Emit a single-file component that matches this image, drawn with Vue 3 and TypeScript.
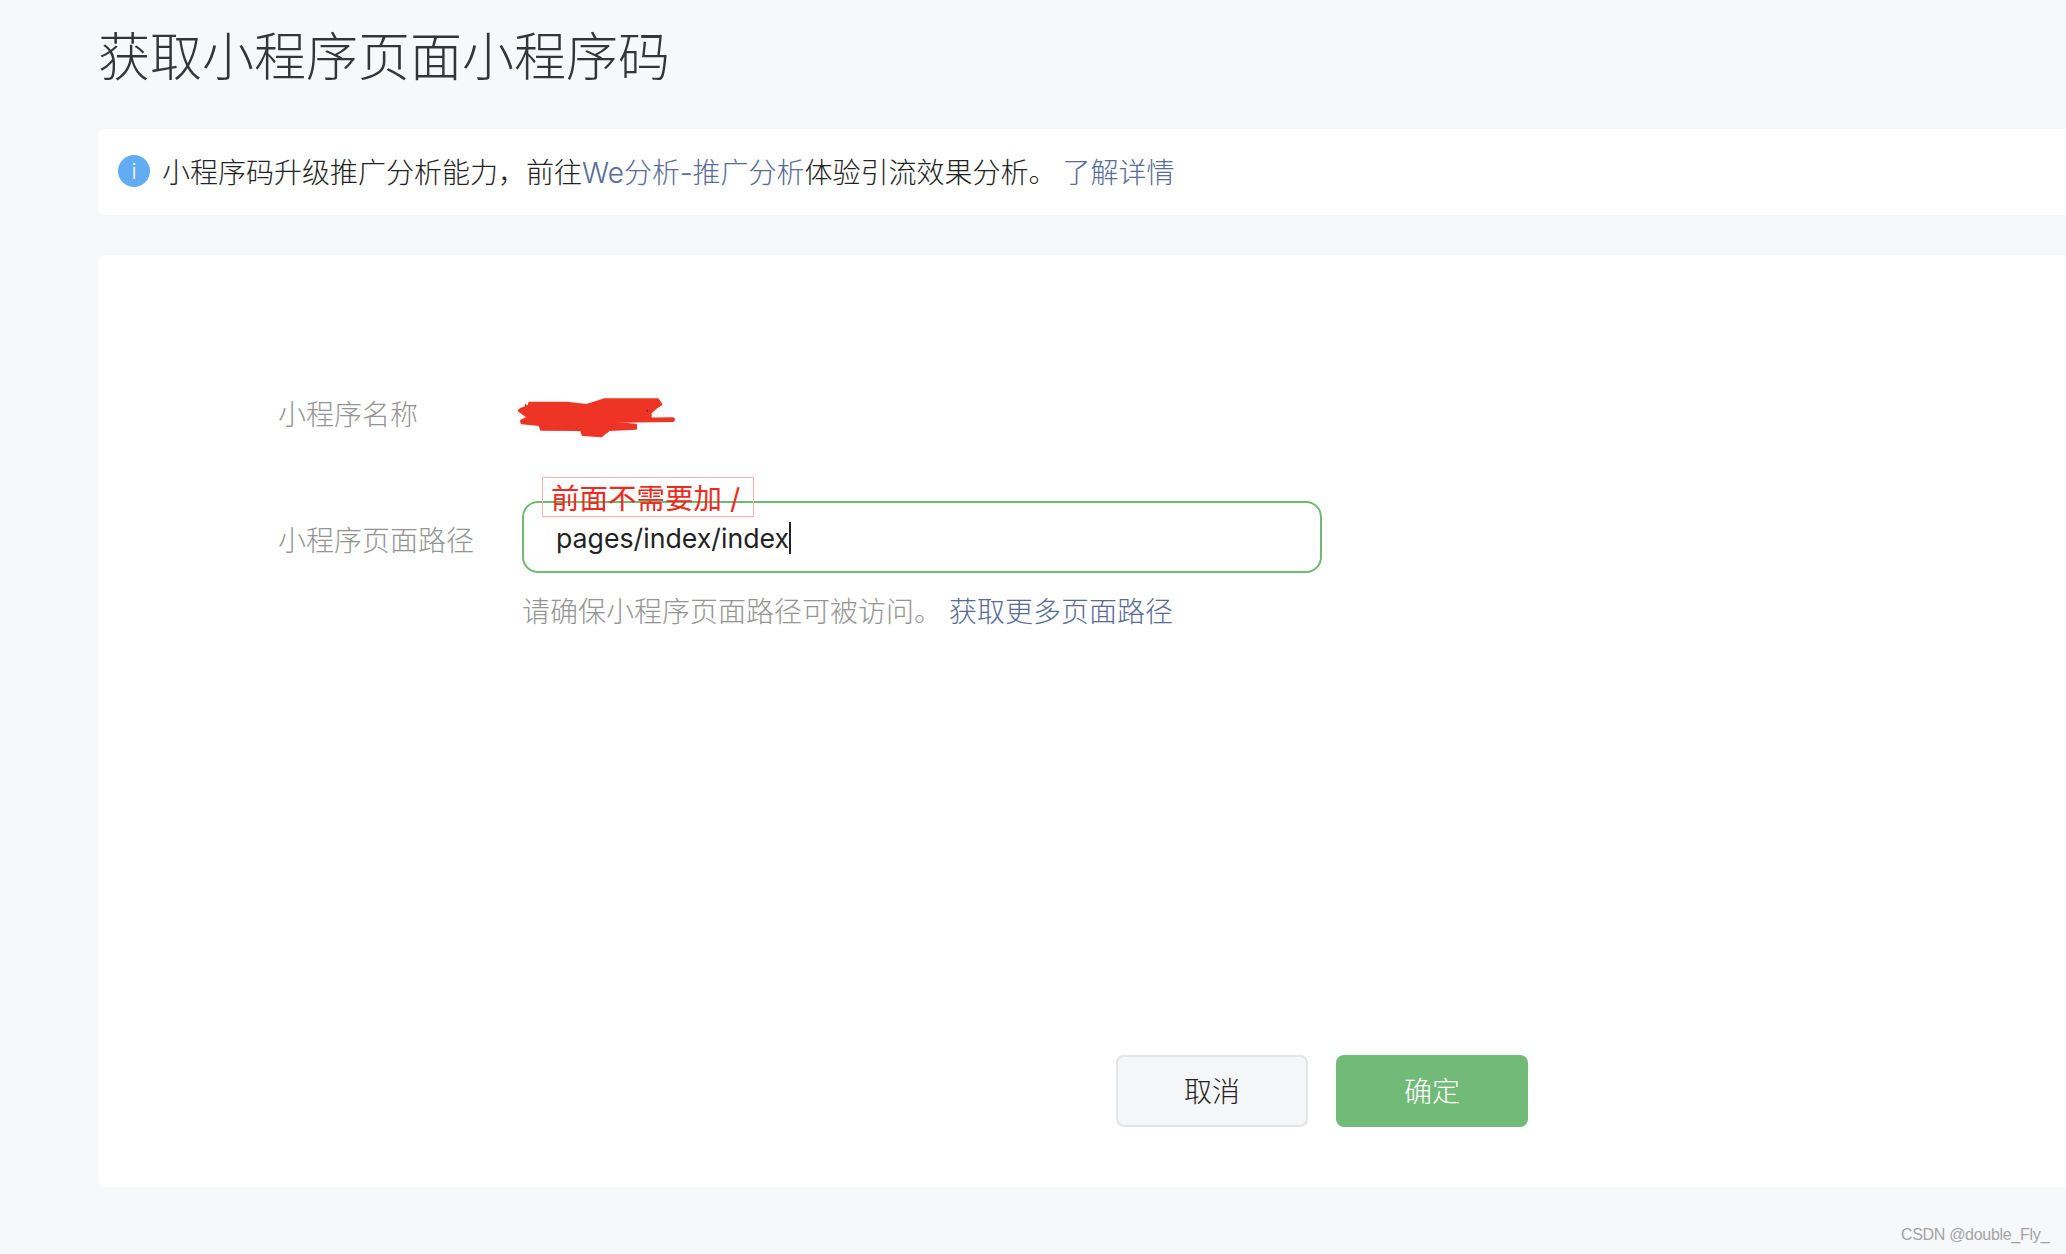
<script setup lang="ts">
const path = 'pages/index/index'
</script>

<template>
  <div class="page">
    <h1 class="title">获取小程序页面小程序码</h1>

    <div class="notice">
      <span class="notice-icon">i</span>
      <span>小程序码升级推广分析能力，前往<a class="link">We分析-推广分析</a>体验引流效果分析。</span>
      <a class="link more">了解详情</a>
    </div>

    <div class="card">
      <div class="row name-row">
        <label class="label">小程序名称</label>
        <svg class="scribble" viewBox="0 0 600 240" width="200" height="80">
          <path
            d="M88 68 L200 68 L260 75 L312 58 L474 58 L484 73 L468 84 L452 98 L452 112 L300 125 L408 134 L408 146 L328 150 L303 169 L248 165 L243 150 L123 149 L118 135 L65 130 L63 122 L84 112 L56 92 L64 86 L85 78 Z"
            fill="#ee3424"
            stroke="#ee3424"
            stroke-width="6"
            stroke-linejoin="round"
          />
          <path d="M300 122 L518 119" fill="none" stroke="#ee3424" stroke-width="14" stroke-linecap="round" />
          <circle cx="77" cy="76" r="3" fill="#4a3a38" />
          <circle cx="442" cy="92" r="3" fill="#4a3a38" />
        </svg>
      </div>

      <div class="row path-row">
        <label class="label path-label">小程序页面路径</label>
        <div class="field">
          <div class="input">
            <span>{{ path }}</span><i class="caret"></i>
            <span class="annotation">前面不需要加 /</span>
          </div>
          <p class="tips">请确保小程序页面路径可被访问。 <a class="link">获取更多页面路径</a></p>
        </div>
      </div>

      <div class="actions">
        <button class="btn btn-default">取消</button>
        <button class="btn btn-primary">确定</button>
      </div>
    </div>

    <span class="watermark">CSDN @double_Fly_</span>
  </div>
</template>

<style>
body {
  background: #f7f8fa;
}
</style>

<style scoped>
.page {
  position: relative;
  height: 1254px;
  padding-left: 98px;
  box-sizing: border-box;
  overflow: hidden;
  background: #f7f8fa;
  font-family: Inter, "Noto Sans CJK SC", sans-serif;
  font-size: 28px;
  color: #222;
}
.title {
  margin: 0;
  height: 129px;
  padding-bottom: 22px;
  box-sizing: border-box;
  display: flex;
  align-items: center;
  font-size: 52px;
  font-weight: 300;
  color: #353535;
}
.notice {
  height: 86px;
  padding-left: 20px;
  padding-bottom: 2px;
  box-sizing: border-box;
  display: flex;
  align-items: center;
  background: #fff;
  border-radius: 8px 0 0 8px;
  font-weight: 300;
  white-space: nowrap;
}
.notice-icon {
  width: 32px;
  height: 32px;
  margin-right: 12px;
  border-radius: 50%;
  background: #62acf3;
  color: #fff;
  font-size: 22px;
  line-height: 32px;
  text-align: center;
  font-weight: 300;
}
.link {
  color: #576b95;
}
.more {
  margin-left: 6px;
}
.card {
  margin-top: 40px;
  height: 932px;
  padding: 131px 0 60px 180px;
  box-sizing: border-box;
  display: flex;
  flex-direction: column;
  background: #fff;
  border-radius: 8px 0 0 8px;
  font-weight: 300;
}
.row {
  display: flex;
}
.name-row {
  height: 56px;
  align-items: center;
}
.path-row {
  margin-top: 59px;
}
.label {
  width: 244px;
  flex-shrink: 0;
  color: #949494;
  white-space: nowrap;
}
.name-row .label {
  padding-bottom: 2px;
}
.path-label {
  line-height: 72px;
  padding-top: 4px;
}
.scribble {
  display: block;
  margin: 12px 0 0 -22px;
}
.input {
  position: relative;
  width: 800px;
  height: 72px;
  padding-left: 32px;
  padding-top: 2px;
  box-sizing: border-box;
  display: flex;
  align-items: center;
  border: 2px solid #6dbb70;
  border-radius: 16px;
  font-weight: 400;
  font-size: 26.7px;
}
.caret {
  width: 2px;
  height: 32px;
  background: #222;
}
.annotation {
  position: absolute;
  left: 18px;
  top: -26px;
  width: 212px;
  height: 40px;
  padding-left: 8px;
  box-sizing: border-box;
  border: 1px solid #fbb2ad;
  color: #ee2a1e;
  font-size: 28.5px;
  line-height: 42px;
  font-weight: 400;
  white-space: nowrap;
}
.tips {
  margin: 14px 0 0;
  line-height: 50px;
  color: #949494;
  white-space: nowrap;
  word-spacing: -1px;
}
.actions {
  margin-top: auto;
  margin-left: 838px;
  display: flex;
  gap: 28px;
}
.btn {
  width: 192px;
  height: 72px;
  padding-bottom: 4px;
  box-sizing: border-box;
  border-radius: 8px;
  font-family: inherit;
  font-size: 28px;
  font-weight: 300;
}
.btn-default {
  background: #f5f6f8;
  border: 2px solid #e3e4e6;
  color: #222;
}
.btn-primary {
  background: #72ba77;
  border: 0;
  color: #fff;
}
.watermark {
  position: absolute;
  right: 17px;
  top: 1226px;
  font-family: "Liberation Sans", sans-serif;
  font-size: 16px;
  letter-spacing: -0.3px;
  font-weight: 400;
  color: #a3a3a3;
}
</style>
